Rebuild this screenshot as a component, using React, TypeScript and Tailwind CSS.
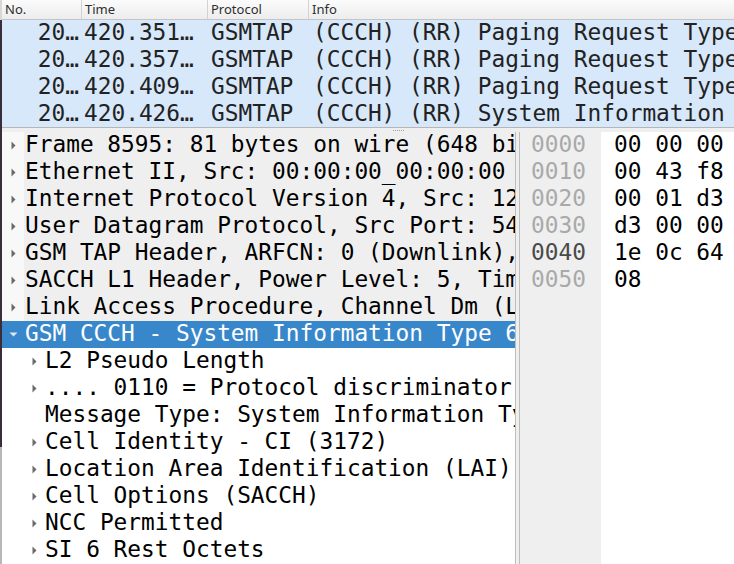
import React from 'react';

const mono = { fontFamily: '"DejaVu Sans Mono", "Liberation Mono", monospace' };

type Pkt = { no: string; time: string; proto: string; info: string };

const packets: Pkt[] = [
  { no: '20…', time: '420.351…', proto: 'GSMTAP', info: '(CCCH) (RR) Paging Request Type 1' },
  { no: '20…', time: '420.357…', proto: 'GSMTAP', info: '(CCCH) (RR) Paging Request Type 1' },
  { no: '20…', time: '420.409…', proto: 'GSMTAP', info: '(CCCH) (RR) Paging Request Type 1' },
  { no: '20…', time: '420.426…', proto: 'GSMTAP', info: '(CCCH) (RR) System Information Type 6' },
];

type Node = { text: string; level: 0 | 1; arrow: 'right' | 'down' | 'none'; selected?: boolean };

const tree: Node[] = [
  { text: 'Frame 8595: 81 bytes on wire (648 bits), 81 bytes captured', level: 0, arrow: 'right' },
  { text: 'Ethernet II, Src: 00:00:00_00:00:00 (00:00:00:00:00:00)', level: 0, arrow: 'right' },
  { text: 'Internet Protocol Version 4, Src: 127.0.0.1', level: 0, arrow: 'right' },
  { text: 'User Datagram Protocol, Src Port: 54321', level: 0, arrow: 'right' },
  { text: 'GSM TAP Header, ARFCN: 0 (Downlink), TS: 0', level: 0, arrow: 'right' },
  { text: 'SACCH L1 Header, Power Level: 5, Timing Advance: 0', level: 0, arrow: 'right' },
  { text: 'Link Access Procedure, Channel Dm (LAPDm)', level: 0, arrow: 'right' },
  { text: 'GSM CCCH - System Information Type 6', level: 0, arrow: 'down', selected: true },
  { text: 'L2 Pseudo Length', level: 1, arrow: 'right' },
  { text: '.... 0110 = Protocol discriminator: Radio Resources', level: 1, arrow: 'right' },
  { text: 'Message Type: System Information Type 6', level: 1, arrow: 'none' },
  { text: 'Cell Identity - CI (3172)', level: 1, arrow: 'right' },
  { text: 'Location Area Identification (LAI)', level: 1, arrow: 'right' },
  { text: 'Cell Options (SACCH)', level: 1, arrow: 'right' },
  { text: 'NCC Permitted', level: 1, arrow: 'right' },
  { text: 'SI 6 Rest Octets', level: 1, arrow: 'right' },
];

const hexRows = [
  { off: '0000', bytes: '00 00 00 00 00 00', hi: false },
  { off: '0010', bytes: '00 43 f8 00 00 40', hi: false },
  { off: '0020', bytes: '00 01 d3 00 00 00', hi: false },
  { off: '0030', bytes: 'd3 00 00 00 00 00', hi: false },
  { off: '0040', bytes: '1e 0c 64 2b 2b 2b', hi: true },
  { off: '0050', bytes: '08', hi: false },
];

function Arrow({ dir, light }: { dir: 'right' | 'down'; light?: boolean }) {
  if (dir === 'down') {
    return (
      <svg width="9" height="5" viewBox="0 0 9 5">
        <path d="M0.5 0.5 L8.5 0.5 L4.5 4.5 Z" fill={light ? '#dce9f5' : '#555'} />
      </svg>
    );
  }
  return (
    <svg width="5" height="9" viewBox="0 0 5 9">
      <path d="M0.5 0.5 L4.5 4.5 L0.5 8.5 Z" fill="#6a6a6a" />
    </svg>
  );
}

function Dots() {
  return (
    <div className="flex gap-[1px]">
      {[0, 1, 2, 3, 4, 5].map((i) => (
        <span key={i} className="block w-[1px] h-[1px] bg-[#a0a0a0]" />
      ))}
    </div>
  );
}

function TreeRow({ node }: { node: Node }) {
  if (node.selected) {
    return (
      <div className="h-[27px] flex items-center bg-[#3987cb] text-white">
        <div className="w-[23px] shrink-0 flex items-center pl-[7px]">
          <Arrow dir="down" light />
        </div>
        <span className="whitespace-nowrap pb-[2px]">{node.text}</span>
      </div>
    );
  }
  if (node.level === 0) {
    return (
      <div className="h-[27px] flex items-center">
        <div className="w-[22px] shrink-0 h-full flex items-center pl-[9px] bg-[#f8f8f8]">
          <Arrow dir="right" />
        </div>
        <div className="flex-1 h-full flex items-center pl-[1px] pb-[2px] bg-[#efefef] text-black">
          <span className="whitespace-nowrap">{node.text}</span>
        </div>
      </div>
    );
  }
  return (
    <div className="h-[27px] flex items-center bg-white text-black">
      <div className="w-[43px] shrink-0 flex items-center pl-[30px]">
        {node.arrow === 'right' && <Arrow dir="right" />}
      </div>
      <span className="whitespace-nowrap pb-[2px]">{node.text}</span>
    </div>
  );
}

export default function App() {
  return (
    <div className="w-[734px] h-[564px] overflow-hidden flex bg-white">
      <div className="w-[2px] shrink-0 flex flex-col">
        <div className="h-[20px] bg-[#d8d8d8]" />
        <div className="h-[427px] bg-[#3a2c39]" />
        <div className="flex-1 bg-[#b8b8b8]" />
      </div>
      <div className="flex-1 min-w-0 flex flex-col">
        {/* packet list */}
        <div
          className="h-[20px] shrink-0 flex text-[13px] text-[#2e2e2e] bg-gradient-to-b from-[#fbfbfb] to-[#ededed] border-b border-[#c4c4c4]"
          style={{ fontFamily: '"Noto Sans", "Open Sans", sans-serif' }}
        >
          <div className="w-[80px] shrink-0 border-r border-[#d2d2d2] pl-[3px] leading-[19px]">No.</div>
          <div className="w-[126px] shrink-0 border-r border-[#d2d2d2] pl-[3px] leading-[19px]">Time</div>
          <div className="w-[101px] shrink-0 border-r border-[#d2d2d2] pl-[3px] leading-[19px]">Protocol</div>
          <div className="flex-1 pl-[3px] leading-[19px]">Info</div>
        </div>
        <div className="h-[107px] shrink-0 bg-[#d7e8fa] text-[22.8px] text-[#222]" style={mono}>
          {packets.map((p, i) => (
            <div key={i} className="h-[27px] flex items-center pb-[2px] whitespace-nowrap overflow-hidden">
              <div className="w-[80px] shrink-0 text-right pr-[3px]">{p.no}</div>
              <div className="w-[126px] shrink-0 pl-[2px]">{p.time}</div>
              <div className="w-[101px] shrink-0 pl-[3px]">{p.proto}</div>
              <div className="pl-[4px]">{p.info}</div>
            </div>
          ))}
        </div>
        <div className="h-[5px] shrink-0 border-t border-[#b6b6b6] bg-[#efefef] flex justify-center items-center">
          <div className="ml-[60px]">
            <Dots />
          </div>
        </div>

        {/* details + bytes */}
        <div className="flex-1 min-h-0 flex text-[22.8px]" style={mono}>
          <div className="w-[514px] shrink-0 overflow-hidden border-r border-[#bdbdbd]">
            {tree.map((n, i) => (
              <TreeRow key={i} node={n} />
            ))}
          </div>
          <div className="w-[3px] shrink-0 bg-[#efefef]" />
          <div className="flex-1 flex border-l border-[#bdbdbd] overflow-hidden">
            <div className="w-[81px] shrink-0 bg-[#efefef] pl-[11px]">
              {hexRows.map((r) => (
                <div
                  key={r.off}
                  className={`h-[27px] flex items-center pb-[2px] ${r.hi ? 'text-[#4a4a4a]' : 'text-[#a9a9a9]'}`}
                >
                  {r.off}
                </div>
              ))}
            </div>
            <div className="flex-1 pl-[13px] text-black">
              {hexRows.map((r) => (
                <div key={r.off} className="h-[27px] flex items-center pb-[2px] whitespace-pre">
                  {r.bytes}
                </div>
              ))}
            </div>
          </div>
        </div>
      </div>
    </div>
  );
}
